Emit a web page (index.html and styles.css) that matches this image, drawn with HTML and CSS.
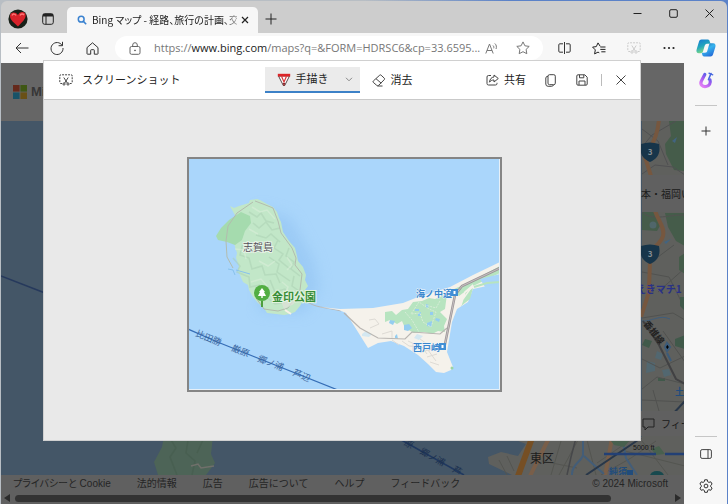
FILE: index.html
```html
<!DOCTYPE html>
<html lang="ja">
<head>
<meta charset="utf-8">
<title>Bing マップ</title>
<link rel="stylesheet" href="styles.css">
</head>
<body>
<div class="window">
  <header class="titlebar">
    <button class="icon-btn avatar" aria-label="プロファイル">
      <svg width="20" height="20" viewBox="0 0 20 20"><circle cx="10" cy="10" r="9.6" fill="#182018"/><path d="M10 17.5C7.500 15 1.500 11 2 6.500 2.500 3 7.500 2.200 10 6c1.500-3.500 6.500-4 7.500-.5C18.500 10 13 14 10 17.500z" fill="#d8232b"/><path d="M4 6.500c1-2 3-1.800 4 0M12 6.500c1-2 3-2 4-.5" stroke="#f77" stroke-width="1.400" fill="none"/></svg>
    </button>
    <button class="icon-btn tabs-btn" aria-label="タブ操作メニュー">
      <svg width="12" height="12" viewBox="0 0 12 12" fill="none" stroke="#222"><rect x=".7" y=".7" width="10.600" height="10.600" rx="2"/><path d="M1 2.200h10" stroke-width="2.600"/><path d="M4 3v8"/></svg>
    </button>
    <div class="tab">
      <svg width="10" height="10" viewBox="0 0 10 10" fill="none" stroke="#3a82d0" stroke-width="1.500"><circle cx="4.200" cy="4.200" r="2.900"/><path d="M6.400 6.400 9.200 9.200"/></svg>
      <span class="tab-title">Bing マップ - 経路、旅行の計画、交</span>
      <button class="icon-btn tab-close" aria-label="タブを閉じる"><svg width="8" height="8" viewBox="0 0 8 8" stroke="#222" stroke-width="1.200"><path d="M1 1l6 6M7 1 1 7"/></svg></button>
    </div>
    <button class="icon-btn new-tab" aria-label="新しいタブ"><svg width="12" height="12" viewBox="0 0 12 12" stroke="#222"><path d="M6 .5v11M.5 6h11"/></svg></button>
    <div class="caption">
      <button class="icon-btn" aria-label="最小化"><svg width="9" height="9" viewBox="0 0 9 9" stroke="#222"><path d="M.5 4.500h8"/></svg></button>
      <button class="icon-btn" aria-label="最大化"><svg width="9" height="9" viewBox="0 0 9 9" fill="none" stroke="#222"><rect x=".7" y=".7" width="7.600" height="7.600" rx="1.300"/></svg></button>
      <button class="icon-btn" aria-label="閉じる"><svg width="9" height="9" viewBox="0 0 9 9" stroke="#222"><path d="M.5.5l8 8M8.500.5l-8 8"/></svg></button>
    </div>
  </header>

  <nav class="toolbar">
    <div class="nav-buttons">
      <button class="icon-btn" aria-label="戻る"><svg width="14" height="12" viewBox="0 0 14 12" fill="none" stroke="#333"><path d="M13.500 6H1M6 1 1 6l5 5"/></svg></button>
      <button class="icon-btn" aria-label="更新"><svg width="14" height="14" viewBox="0 0 14 14" fill="none" stroke="#333"><path d="M12.200 4.500A6 6 0 1 0 13 7M12.500.8v3.900H8.600"/></svg></button>
      <button class="icon-btn" aria-label="ホーム"><svg width="13" height="13" viewBox="0 0 13 13" fill="none" stroke="#333"><path d="M1 5.600 6.500.8 12 5.600v6a.6.6 0 0 1-.6.6H8.300V8.300a.6.6 0 0 0-.6-.6H5.300a.6.6 0 0 0-.6.6v3.900H1.600a.6.6 0 0 1-.6-.6z"/></svg></button>
    </div>
    <div class="address">
      <svg width="12" height="13" viewBox="0 0 12 13" fill="none" stroke="#666"><rect x="1" y="4.500" width="10" height="7.800" rx="1.500"/><path d="M3.700 4.500V3a2.300 2.300 0 0 1 4.600 0v1.500"/><circle cx="6" cy="8.400" r=".5" fill="#666"/></svg>
      <a class="url" href="#">https://<b>www.bing.com</b>/maps?q=&amp;FORM=HDRSC6&amp;cp=33.6595...</a>
      <button class="icon-btn read-aloud" aria-label="音声で読み上げる"><svg width="13" height="13" viewBox="0 0 13 13" fill="none" stroke="#777"><path d="M.8 11.500 4.500 2l3.700 9.500M2 8.500h5M8 3.500c.8.8 1 1.800.7 2.800M9.800 1.500c1.700 1.500 2 3.500 1.200 5.500"/></svg></button>
      <button class="icon-btn" aria-label="お気に入りに追加"><svg width="14" height="14" viewBox="0 0 14 14" fill="none" stroke="#777" stroke-linejoin="round"><path d="M7 .9l1.900 3.900 4.300.6-3.100 3 .7 4.300L7 10.700l-3.800 2 .7-4.300-3.100-3 4.300-.6z"/></svg></button>
    </div>
    <div class="tools">
      <button class="icon-btn" aria-label="画面を分割する"><svg width="13" height="12" viewBox="0 0 13 12" fill="none" stroke="#333"><path d="M5 1.800H1.800A1 1 0 0 0 .8 2.800v6.400a1 1 0 0 0 1 1H5M8 1.800h3.200a1 1 0 0 1 1 1v6.400a1 1 0 0 1-1 1H8M6.500 0v12"/></svg></button>
      <button class="icon-btn" aria-label="お気に入り"><svg width="14" height="13" viewBox="0 0 14 13" fill="none" stroke="#222" stroke-linejoin="round"><path d="M8.200 4.300 6 .9 4.300 4.600.6 5.100l2.700 2.800-.7 4L6 10.100l1.300.7"/><path d="M8.300 5h5.200M8.300 7.400h5.200M9.300 9.800h4.200"/></svg></button>
      <button class="icon-btn" aria-label="スクリーンショット" disabled><svg width="14" height="12" viewBox="0 0 14 12" fill="none" stroke="#ccc"><path d="M3 9.500H1.800a1 1 0 0 1-1-1v-6.700a1 1 0 0 1 1-1h10.400a1 1 0 0 1 1 1v6.700a1 1 0 0 1-1 1H11" stroke-dasharray="2 1"/><path d="M4.800 3.500l3.500 5.500M9.200 3.500 5.700 9"/><circle cx="5" cy="10" r="1.200"/><circle cx="9" cy="10" r="1.200"/></svg></button>
      <button class="icon-btn" aria-label="設定など"><svg width="12" height="4" viewBox="0 0 12 4" fill="#222"><circle cx="1.500" cy="2" r="1.100"/><circle cx="6" cy="2" r="1.100"/><circle cx="10.500" cy="2" r="1.100"/></svg></button>
    </div>
    <button class="icon-btn copilot" aria-label="Copilot">
      <svg width="20" height="18" viewBox="0 0 20 18"><defs><linearGradient id="ca" x2=".4" y2="1"><stop stop-color="#1477d4"/><stop offset=".55" stop-color="#22a6bc"/><stop offset="1" stop-color="#83dc83"/></linearGradient><linearGradient id="cb" x2=".6" y2="1"><stop stop-color="#1857a8"/><stop offset=".5" stop-color="#37b4ed"/><stop offset="1" stop-color="#256ed9"/></linearGradient></defs><path d="M5.500.5h6.300c1.500 0 1.800 1.300 2.200 2.700l.5 1.500H11c-1.500 0-2 1-2.400 2.300L7 12.500c-.4 1.300-1.200 1.700-2.400 1.700H3c-2.500 0-3-1.700-2.300-4L3 2.500C3.400 1.200 4.200.5 5.500.5z" fill="url(#ca)"/><path d="M14.500 4.200H17c2.400 0 3 1.700 2.300 4L17 15.500c-.4 1.300-1.200 2-2.500 2H8.200c-1.500 0-1.800-1.300-2.200-2.700l-.3-1H9c1.500 0 2-1 2.400-2.300L13 6c.3-1.200.8-1.800 1.500-1.800z" fill="url(#cb)"/></svg>
    </button>
  </nav>

  <div class="content">
    <main class="page">
      <div class="page-head">
        <svg width="14" height="14" viewBox="0 0 14 14"><path d="M0 0h6.600v6.600H0z" fill="#65291b"/><path d="M7.400 0H14v6.600H7.400z" fill="#3f5714"/><path d="M0 7.400h6.600V14H0z" fill="#185267"/><path d="M7.400 7.400H14V14H7.400z" fill="#695016"/></svg>
        <span>Microsoft</span>
      </div>
      <div class="page-map">
        <svg class="world" viewBox="0 121 684 354" preserveAspectRatio="xMinYMin slice" aria-label="地図">
          <path d="M0 121h684v354H0z" fill="#445667"/>
          <path d="M0 276 44 293" stroke="#26395c" stroke-width="1.500"/>
          <path d="M163 436 161 447 153 462 157 475H205L214 463 210 454 212 436z" fill="#4d6457"/>
          <path d="M170 440l5 8-6 9 7 18M187 440l-2 13 9 8-3 14M202 440l-6 13" stroke="#485f51" fill="none" stroke-width="1.500"/><path d="M190 466l7-2 3 4 13-2" stroke="#70706b" fill="none" stroke-width="1.500"/>
          <path d="M395 437 463 475" stroke="#20385f" stroke-width="1.500"/>
          <g class="dim-route" transform="translate(404 442) rotate(29)"><text x="0" y="3">原</text><text x="18" y="3">郷ノ浦</text><text x="55" y="3">芦</text></g>
          <path d="M641 121h43v354H511L488 464 487 457 500 452 517 456 525 444 507 437H641z" fill="#5f605d"/>
          <path d="M498 460l8 15M506 456l7 15M577 440l-19 35M586 440l9 35M596 463l35-24M560 441l-10 34M541 461l35 7M624 451l60 15M600 475l30-17 25-17M641 441l26 34" stroke="#545551" fill="none"/>
          <path d="M531 438 517 476" stroke="#764f24" stroke-width="6"/><path d="M548 438l-9 18-10 20M611 438l-7 38" stroke="#795e49" fill="none" stroke-width="4"/>
          <path d="M575 438l-5 19-4 18" stroke="#46474a" fill="none" stroke-width="1.500"/>
          <path d="M582 439v16c-1 6-12 10-11 20M583 456l20 18M622 443l3 15 11 17" stroke="#435d78" fill="none" stroke-width="2"/>
          <path d="M640 438 585 475" stroke="#293749" stroke-width="2"/>
          <path d="M610 441h18l-5 6-10-2zM650 449l8-3 6 8-9 1z" fill="#48604e"/>
          <text class="district" x="529" y="463">東区</text>
          <path d="M668 121h16v50l-11-1-8-16-1-10 6-8z" fill="#455c4a"/>
          <path d="M671 141l5-4-2 6z" fill="#426481"/>
          <path d="M641 147l10-12 24-14M641 174l13-9 18 2 12 8M641 129l16 12 10 24" stroke="#505052" fill="none"/>
          <path d="M658 119c-1 14-5 23-10 30l-4 8 6 19" stroke="#76573f" stroke-width="4" fill="none"/>
          <path d="M641 212h13l6 12-4 7-15-1zM664 213h20v33l-9-5-8-14zM678 257l6-4v21l-6-4z" fill="#455c4a"/>
          <circle cx="652" cy="225" r="3.500" fill="#50666a"/><path d="M663 242l7-3-5 5z" fill="#426481"/>
          <path d="M641 212c10 10 30 2 43 3M657 257l16-12M641 272l27 5 12 24M657 292l27-24" stroke="#515250" fill="none"/>
          <path d="M654 211c4 11 10 17 8 25s-11 11-13 19c0 15-1 28-1 37l-8 25" stroke="#76573f" stroke-width="4" fill="none"/>
          <path d="M644 339l7 2-3 7-7-3zM674 339l10-4v14l-10-3zM679 297h5v14l-5-5zM657 378h7v3h-7z" fill="#40594a"/>
          <path d="M646 361l8 2v8l-9 2zM656 351l6 3-2 6-6-2zM661 370l7-1 2 6-7 2z" fill="#526770"/>
          <path d="M666 343l3 4-3 4-2-4zM666 353l4 8" stroke="#3b5b7a" stroke-width="2"/>
          <path d="M641 321c10 1 17-7 28-2" stroke="#3f5d7c" fill="none"/>
          <path d="M641 318l31-5 12 7M662 331l22 31M641 359l18 9 25-12M641 389l15-12 28 7M641 400l43 2M652 390l6 21" stroke="#515250" fill="none"/>
          <path d="M642 321l16 24 17 34 9 5" stroke="#414143" fill="none" stroke-width="2"/>
          <path d="M684 401l-13 14" stroke="#293749" stroke-width="2"/>
          <text class="rail" transform="translate(642 324) rotate(51)">香椎線</text>
          <path d="M640 144q9-3 18 0c2 10-2 15-9 18-7-3-11-8-9-18zM640 246q9-3 18 0c2 10-2 15-9 18-7-3-11-8-9-18z" fill="#17354a"/>
          <text class="shield" x="649" y="155">3</text><text class="shield" x="649" y="257">3</text>
          <text class="station" x="635" y="293">えきマチ1</text><text class="blue-label" x="674" y="395">土</text>
          <path d="M641 175h43v37h-43z" fill="#606060"/><text class="card-text" x="640" y="198">本・福岡い</text>
          <path d="M600 411h84v25h-84z" fill="#606060"/>
          <path d="M642 419h11v8h-6l-3 3v-3h-2z" fill="none" stroke="#222"/><text class="card-text" x="660" y="428">フィー</text>
          <text class="scale" x="632" y="450">5000 ft</text><path d="M603 454h52M664 454h20" stroke="#234075" stroke-width="2.500"/>
          <text class="blue-label" x="608" y="475">純須</text><path d="M626 470h6v5h-6z" fill="#214c7c"/><ellipse cx="656" cy="476" rx="7" ry="5" fill="#17494e"/>
        </svg>
      </div>
      <footer class="page-foot">
        <a href="#">プライバシーと Cookie</a><a href="#">法的情報</a><a href="#">広告</a><a href="#">広告について</a><a href="#">ヘルプ</a><a href="#">フィードバック</a>
        <span class="copyright">© 2024 Microsoft</span>
      </footer>
      <div class="scrollbar">
        <svg width="6" height="8" viewBox="0 0 6 8" fill="#2b2b2b"><path d="M6 0v8L0 4z"/></svg>
        <div class="track"><div class="thumb"></div></div>
        <svg width="6" height="8" viewBox="0 0 6 8" fill="#2b2b2b"><path d="M0 0v8l6-4z"/></svg>
      </div>
    </main>
    <aside class="sidebar">
      <button class="icon-btn" aria-label="デザイナー"><svg width="16" height="18" viewBox="0 0 16 18"><defs><linearGradient id="dz" x1=".8" x2=".2" y2="1"><stop stop-color="#4a62e6"/><stop offset=".45" stop-color="#a05af0"/><stop offset="1" stop-color="#e27df5"/></linearGradient></defs><path d="M6.800 3.500 3.400 10C1.500 14 5 16 8 15.500c3.400-.5 5-3.500 4-6.500" fill="none" stroke="url(#dz)" stroke-width="3.200" stroke-linecap="round"/><path d="M13 2.500 10.500 8.500" stroke="#4868df" stroke-width="1.600" stroke-linecap="round"/><path d="M11 2.200l3.700 1.600" stroke="#4868df" stroke-width="1.400" stroke-linecap="round"/></svg></button>
      <hr>
      <button class="icon-btn" aria-label="追加"><svg width="10" height="10" viewBox="0 0 10 10" stroke="#333"><path d="M5 .5v9M.5 5h9"/></svg></button>
      <div class="spacer"></div>
      <hr>
      <button class="icon-btn" aria-label="サイドバー"><svg width="12" height="10" viewBox="0 0 12 10" fill="none" stroke="#444"><rect x=".6" y=".6" width="10.800" height="8.800" rx="1.500"/><path d="M8 .6v8.800"/></svg></button>
      <button class="icon-btn gear" aria-label="設定"><svg width="14" height="14" viewBox="0 0 14 14" fill="none" stroke="#333" stroke-linejoin="round"><path d="M5.700.8h2.600l.4 1.900 1.200.7 1.900-.6 1.300 2.300-1.400 1.300v1.300l1.400 1.300-1.300 2.300-1.900-.6-1.200.7-.4 1.900H5.700l-.4-1.900-1.200-.7-1.900.6L.9 9l1.400-1.300V6.400L.9 5.100l1.300-2.300 1.900.6 1.200-.7z"/><circle cx="7" cy="7" r="1.900"/></svg></button>
    </aside>
  </div>

  <section class="dialog" role="dialog" aria-label="スクリーンショット">
    <div class="dialog-head">
      <h1 class="dialog-title"><svg width="14" height="12" viewBox="0 0 14 12" fill="none" stroke="#444"><path d="M3 9.500H1.800a1 1 0 0 1-1-1v-6.700a1 1 0 0 1 1-1h10.400a1 1 0 0 1 1 1v6.700a1 1 0 0 1-1 1H11" stroke-dasharray="2 1"/><path d="M4.800 3.500l3.500 5.500M9.200 3.500 5.700 9"/><circle cx="5" cy="10" r="1.100"/><circle cx="9" cy="10" r="1.100"/></svg>スクリーンショット</h1>
      <div class="draw-tools">
        <button class="tool draw"><svg width="14" height="14" viewBox="0 0 14 14"><path d="M1.500 4h11L7.700 13.500H6.300z" fill="#fff" stroke="#5a4a4a"/><path d="M4.600 4.500 7 10l2.400-5.500" fill="none" stroke="#d8383b" stroke-width="1.200"/><path d="M.8 1.800h12.400v2.700H.8z" fill="#dc2428"/><path d="M5.900 11h2.200L7.400 14h-.8z" fill="#8f1c20"/></svg>手描き<svg class="chevron" width="8" height="5" viewBox="0 0 8 5" fill="none" stroke="#888"><path d="M1 .8l3 3 3-3"/></svg></button>
        <button class="tool"><svg width="14" height="13" viewBox="0 0 14 13" fill="none" stroke="#444" stroke-linejoin="round"><path d="M1.300 7 7.700 1.200a1 1 0 0 1 1.400 0l3.200 3a1 1 0 0 1 0 1.400L6.700 11.300a1.500 1.500 0 0 1-2 0L1.300 8.400a1 1 0 0 1 0-1.400zM4 4.700l5.200 4.500M5.500 12h5"/></svg>消去</button>
      </div>
      <div class="actions">
        <button class="tool share"><svg width="13" height="12" viewBox="0 0 13 12" fill="none" stroke="#444" stroke-linejoin="round"><path d="M5 1.500H2.500A1.500 1.500 0 0 0 1 3v6.500A1.500 1.500 0 0 0 2.500 11h7A1.500 1.500 0 0 0 11 9.500V8.800M8 1l4.300 3.500L8 8V6C6 6 4.500 6.600 3.500 8.200 3.800 5 5.500 3.200 8 3z"/></svg>共有</button>
        <button class="icon-btn" aria-label="コピー"><svg width="11" height="13" viewBox="0 0 11 13" fill="none" stroke="#444"><rect x="3" y=".7" width="7.300" height="10" rx="1.500"/><path d="M3 2.300A2 2 0 0 0 .8 4v6a2.300 2.300 0 0 0 2.300 2.300h3.500A2 2 0 0 0 8.500 11"/></svg></button>
        <button class="icon-btn" aria-label="保存"><svg width="12" height="12" viewBox="0 0 12 12" fill="none" stroke="#444"><path d="M2 .8h6.800l2.400 2.400V10a1.200 1.200 0 0 1-1.200 1.200H2A1.200 1.200 0 0 1 .8 10V2A1.200 1.200 0 0 1 2 .8zM3.500.8v3h4.300v-3M3 11V7h6v4"/></svg></button>
        <span class="divider"></span>
        <button class="icon-btn" aria-label="閉じる"><svg width="10" height="10" viewBox="0 0 10 10" stroke="#444"><path d="M.5.500l9 9M9.500.5l-9 9"/></svg></button>
      </div>
    </div>
    <div class="stage">
      <svg class="shot" viewBox="189 159 311 231" aria-label="志賀島の地図">
        <defs><filter id="soft" x="-20%" y="-20%" width="140%" height="140%"><feGaussianBlur stdDeviation="7"/></filter></defs>
        <path d="M189 159h311v231H189z" fill="#aad6fb"/>
        <path d="M259 208 290 217 313 258 320 289 304 313 259 311z" fill="#8dbff0" opacity=".5" filter="url(#soft)"/>
        <path d="M230 206l4 2 5-2 10-3 1-3 7-1 3 1 7 4 6 3 4 5 2 6 2 4 2 10 6 9 6 7 2 8 1 5 5 6 3 8-1 5 3 6-3 4 1 5-6 11-5 6-5 2-6 1-8-1-9-1-3-5-6-5-5-6-4-7-1-5-5-3-3-7-2-4 1-5-3-8 1-5-2-6-1-6-6 1-4-7 5-8 8-8z" fill="#c2e7c8"/>
        <path d="M241 212l9 4 1 7-6 8-3 9-7 5-8-3-9-2-2-4 5-8 8-8z" fill="#a5dbae"/>
        <g fill="none" stroke="#a9d0b1" stroke-width="1.500" opacity=".5"><path d="M249 212l8 5 4-4 5 8 8 2M253 223l6 5 7-6 6 8 8-2M256 235l10 3 5-4 9 8M243 243l-3 12 9 3 3 11 10-3 3 9 11-1 4 9M278 240l-4 8 9 6-4 6 11 9M269 257l10 7-2 8 13 9M289 248l-3 8 8 6-3 7 9 7M233 258l7 8-3 6 12 5 1 10 10-2M270 280l5 12 10-3 8 9M294 276l-2 10 7 5-2 7M264 295l11 9 13-2"/></g>
        <g fill="none" stroke="#d9efd9" stroke-width="1.500" opacity=".6"><path d="M252 207l8 5 7-2 8 9M249 229l9 5M235 249l9 1 2 9M259 261l9 5 7-5M287 257l5 8-5 5M251 282l10-3 6 7M282 282l6 5-4 10"/></g>
        <path d="M255 201l8 3 10 4 5 13 3 12 11 15 4 10-1 7 7 9-2 16-12 18-10 3-14-2-8-11M253 202l-16 11-9 13-2 15 1 16 6 11" fill="none" stroke="#b3bcae"/>
        <path d="M280 299l10-1 7-7-3 13-10 5z" fill="#dce1d7" opacity=".8"/><path d="M285 310l6 4" stroke="#f7f1e6" stroke-width="2"/>
        <path d="M228 269l5 1 2 5M236 270l14 4" stroke="#88c2ec" fill="none"/>
        <path d="M305 300c9 8 20 7 36 11" stroke="#b7b8b8" fill="none"/>
        <path d="M320 307l20 2 33-1 30-5 15-6 32-10 23-12 27-13v20l-13 4-14 3-5 13-11 7-5 13-5 30 6 15-2 3-7 3-8-1-8-8-10-9-14-9-13-5-13 2-10 5-10-16-12-19-7-3z" fill="#f5f2eb"/>
        <path d="M385 312l7-1 4 4 6-5 6-1 5-7 9-1 7-3 6 1 12-5-2 15-5 3 7 7-3 7 1 6-7-1-6 3-8-2-10 1-9-5-3-7-5 3-7-4-5 2z" fill="#b7e4c0"/>
        <path d="M452 290l20-9 28-15v7l-29 14-12 9zM465 293l8-5-3 11-9 7z" fill="#b7e4c0"/>
        <path d="M458 306l15-21M461 305l4-13 8-7" stroke="#f5f2eb" stroke-width="1.500" fill="none"/>
        <path d="M480 279l20-5v10l-15 3z" fill="#a9d5fa"/><path d="M474 287l13-4 13-1" stroke="#b7e4c0" stroke-width="2" fill="none"/>
        <g fill="#94cdf0"><path d="M404 325l5-1 3 4-4 3-4-1zM427 323l5-2v6l-5-1zM390 320l5 1-2 4-4-2zM436 318l4 1-1 3-4-2zM418 313l3-1v4h-3zM426 304l3 1-1 3-3-1zM415 309h4v2h-4zM395 336l2-2 1 5-3-1zM430 312h3v3h-3z"/></g>
        <path d="M419 302l-8 12 9-1 3 9 8 5 5-15-7-3zM405 312l7 8 7 12M440 301l-4 7-11-3" stroke="#d6edd7" stroke-dasharray="2 1" fill="none"/>
        <path d="M362 334l4-3 6 3-3 3-7-1zM417 334l6 2-4 4-5-2z" fill="#d4e8f1"/>
        <g fill="none" stroke="#dedbd5"><path d="M370 328l9-4-4-5-6 1M382 334l10-3v7M402 341l7 5 13 1 5 7M392 340l7 5M413 343v8M408 341l22 10M420 339l10 7M422 352l12-4M427 357l10-3M430 362l9 3M425 346l11 15"/></g>
        <path d="M344 313l16 15 18 10 27 1 7-7 28 2 7-6" fill="none" stroke="#b9b6b2" stroke-width="1.200"/>
        <path d="M500 268l-38 18-7 9-11 54" fill="none" stroke="#9c9698" stroke-width="2.500"/><path d="M500 268l-38 18-7 9-11 54" fill="none" stroke="#c5bec0"/>
        <circle cx="452" cy="368" r="1.500" fill="#9ad5a4"/>
        <text class="island" x="243" y="251">志賀島</text>
        <path d="M262 301v6" stroke="#4d9e3e" stroke-width="2"/><circle cx="262" cy="293" r="8" fill="#52ae43"/><path d="M262 288l3 4h-1l2 4h-3.300v2h-1.400v-2H258l2-4h-1z" fill="#fff"/>
        <text class="park" x="272" y="301">金印公園</text>
        <g class="station-name"><text x="416" y="297">海ノ中道</text><text x="413" y="351">西戸崎</text></g>
        <path d="M451 289h7v7h-7zM439 343h7v7h-7z" fill="#408fd5"/><path d="M453.500 291h2v3h-2zM441.500 345h2v3h-2z" fill="#fff"/>
        <path d="M188 329l27 12 40 16 83 33" stroke="#356db6" stroke-width="1.300" fill="none"/>
        <g class="route" transform="translate(196 333) rotate(22)"><text x="0" y="3">比田勝</text><text x="39" y="3">厳原</text><text x="67" y="3">郷ノ浦</text><text x="105" y="3">芦辺</text></g>
        <path d="M499.500 159v230.500H189" fill="none" stroke="#e6f0f8"/>
      </svg>
    </div>
  </section>
</div>
</body>
</html>
```

FILE: styles.css
```css
* { box-sizing: border-box; }
body {
  margin: 0;
  background: linear-gradient(90deg, #b8bec4 0 50%, #5b82c8 70%);
  font: 11px/16px "Open Sans", "Noto Sans CJK JP", sans-serif;
  color: #222;
}
button { font: inherit; color: inherit; }
a { color: inherit; text-decoration: none; }
svg { display: block; flex: none; }
.window {
  position: relative;
  display: flex;
  flex-direction: column;
  height: 100vh;
  padding: 1px 1px 0;
}
.icon-btn {
  display: flex;
  flex: none;
  align-items: center;
  justify-content: center;
  width: 24px;
  height: 24px;
  padding: 0;
  border: 0;
  background: none;
}

.titlebar {
  display: flex;
  align-items: flex-end;
  height: 32px;
  background: #cdcdcd;
  border-radius: 6px 6px 0 0;
}
.avatar { margin: 0 5px 2px; }
.tabs-btn { margin: 0 7px 2px 1px; }
.tab {
  display: flex;
  align-items: center;
  width: 191px;
  height: 26px;
  padding: 0 5px 0 10px;
  background: #f7f7f7;
  border-radius: 5px 5px 0 0;
}
.tab-title {
  flex: 1;
  min-width: 0;
  margin-left: 5px;
  white-space: nowrap;
  font-family: "Noto Sans CJK JP", sans-serif;
  font-size: 10px;
  font-feature-settings: "palt";
  mask-image: linear-gradient(90deg, #000 90%, #0006);
}
.tab-close { width: 16px; }
.new-tab { margin: 0 0 2px 1px; }
.caption {
  display: flex;
  align-self: flex-start;
  gap: 12px;
  margin-left: auto;
  padding-right: 6px;
}

.toolbar {
  display: flex;
  align-items: center;
  height: 30px;
  background: #f7f7f7;
}
.nav-buttons { display: flex; gap: 11px; padding: 0 11px 0 9px; }
.address {
  flex: 1;
  display: flex;
  align-items: center;
  min-width: 0;
  height: 24px;
  padding: 0 8px 0 14px;
  background: #fff;
  border-radius: 12px;
}
.url {
  flex: 1;
  min-width: 0;
  margin-left: 13px;
  white-space: nowrap;
  color: #777;
}
.url b { font-weight: 400; color: #222; }
.read-aloud { width: 20px; margin-right: 10px; }
.tools { display: flex; gap: 11px; padding: 0 13px 0 9px; }
.copilot { margin-right: 9px; }

.content { flex: 1; display: flex; min-height: 0; background: #f7f7f7; }
.page { flex: 1; display: flex; flex-direction: column; min-width: 0; background: #606060; }
.page-head {
  display: flex;
  align-items: center;
  gap: 4px;
  height: 58px;
  padding-left: 12px;
  background: #666;
  font-family: "Liberation Sans", sans-serif;
  font-size: 13px;
  font-weight: 700;
  color: #363636;
}
.page-map { flex: 1; min-height: 0; overflow: hidden; }
.world { width: 100%; height: 100%; }
.page-foot {
  display: flex;
  align-items: center;
  gap: 26px;
  height: 17px;
  padding: 0 16px 0 12px;
  white-space: nowrap;
  font-family: "Liberation Sans", "Noto Sans CJK JP", sans-serif;
  font-size: 10px;
  color: #252525;
}
.page-foot a:first-child { font-feature-settings: "palt"; }
.copyright { margin-left: auto; }
.scrollbar {
  display: flex;
  align-items: center;
  gap: 5px;
  height: 12px;
  padding: 0 3px;
}
.track { flex: 1; }
.thumb { width: 91%; height: 7px; border-radius: 4px; background: #333; }

.sidebar {
  display: flex;
  flex-direction: column;
  align-items: center;
  width: 43px;
  padding: 5px 0 6px;
  border-bottom-right-radius: 6px;
}
.sidebar hr { width: 22px; margin: 13px 0; border: 0; border-top: 1px solid #c6c6c6; }
.spacer { flex: 1; }
.sidebar .spacer + hr { margin-bottom: 5px; }
.gear { margin-top: 8px; }

.dialog {
  position: absolute;
  top: 60px;
  right: 87px;
  bottom: 63px;
  left: 43px;
  display: flex;
  flex-direction: column;
  background: #e9e9e9;
  border: 1px solid #d0d0d0;
}
.dialog-head {
  display: grid;
  grid-template-columns: 1fr auto 1fr;
  align-items: center;
  height: 39px;
  background: #fff;
  border-bottom: 1px solid #c9c9c9;
}
.dialog-title {
  display: flex;
  align-items: center;
  gap: 9px;
  margin: 0;
  padding-left: 15px;
  font-size: 11px;
  font-weight: 400;
}
.draw-tools, .actions { display: flex; align-items: center; }
.tool {
  display: flex;
  align-items: center;
  gap: 5px;
  height: 26px;
  padding: 0 7px 0 12px;
  border: 0;
  background: none;
}
.draw {
  width: 95px;
  background: #ebebeb;
  border-bottom: 2px solid #3c81c7;
}
.chevron { margin-left: auto; }
.actions { justify-content: flex-end; gap: 8px; padding-right: 7px; }
.share { padding: 0 4px; }
.divider { width: 1px; height: 12px; background: #bbb; }
.actions .divider { margin: 0 -1px; }
.stage {
  flex: 1;
  display: flex;
  align-items: center;
  justify-content: center;
  min-height: 0;
  padding: 9px 0 0 4px;
}
.shot { width: 315px; height: 235px; border: 2px solid #858585; background: #fff; }

text { font-family: "Noto Sans CJK JP", sans-serif; }
.island { font-size: 10px; fill: #55505a; stroke: #e6f3e6; stroke-width: 2px; paint-order: stroke; }
.park { font-size: 11px; font-weight: 700; fill: #398d38; stroke: #e2f3df; stroke-width: 2px; paint-order: stroke; }
.station-name { font-size: 9px; font-weight: 700; fill: #3b87ce; stroke: #eef5fa; stroke-width: 1px; paint-order: stroke; }
.route { font-size: 9px; fill: #3a66a0; }
.dim-route { font-size: 9px; fill: #1b304f; }
.district { font-size: 12px; fill: #1c1c1c; }
.rail { font-size: 9px; font-weight: 700; fill: #222; }
.shield { font-size: 8px; font-weight: 700; fill: #878f94; text-anchor: middle; }
.station { font-size: 10px; font-weight: 700; fill: #293187; }
.blue-label { font-size: 9px; font-weight: 700; fill: #214c7c; }
.card-text { font-size: 10px; fill: #1a1a1a; }
.scale { font-family: "Liberation Sans", sans-serif; font-size: 7px; fill: #161616; }
```
